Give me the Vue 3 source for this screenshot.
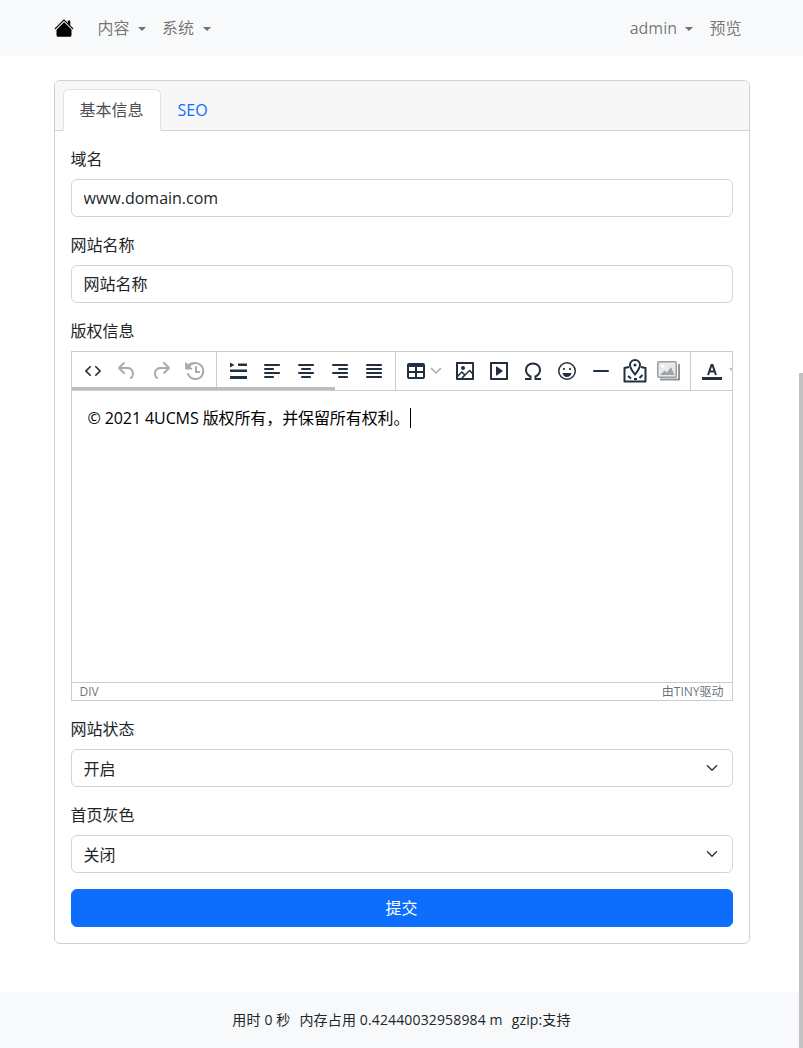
<script setup>
const d = {
  code: 'M9.8 15.7c.3.3.3.8 0 1-.3.4-.9.4-1.2 0l-4.4-4.1a.8.8 0 010-1.2l4.4-4.2c.3-.3.9-.3 1.2 0 .3.3.3.8 0 1.1L6 12l3.8 3.7zM14.2 15.7c-.3.3-.3.8 0 1 .4.4.9.4 1.2 0l4.4-4.1c.3-.3.3-.9 0-1.2l-4.4-4.2a.8.8 0 00-1.2 0c-.3.3-.3.8 0 1.1L18 12l-3.8 3.7z',
  undo: 'M6.4 8H12c3.7 0 6.2 2 6.8 5.1.6 2.7-.4 5.6-2.3 6.8a1 1 0 01-1-1.8c1.1-.6 1.8-2.7 1.4-4.6-.5-2.1-2.1-3.5-4.9-3.5H6.4l3.3 3.3a1 1 0 11-1.4 1.4l-5-5a1 1 0 010-1.4l5-5a1 1 0 011.4 1.4L6.4 8z',
  redo: 'M17.6 10H12c-2.8 0-4.4 1.4-4.9 3.5-.4 2 .3 4 1.4 4.6a1 1 0 11-1 1.8c-2-1.2-2.9-4.1-2.3-6.8.6-3 3-5.1 6.8-5.1h5.6l-3.3-3.3a1 1 0 111.4-1.4l5 5a1 1 0 010 1.4l-5 5a1 1 0 01-1.4-1.4l3.3-3.3z',
  restore: 'M17 13c0 .6-.4 1-1 1h-4V8c0-.6.4-1 1-1s1 .4 1 1v4h2c.6 0 1 .4 1 1zM12.600 3.100a9 9 0 11-8.900 11.400l1.900-.5a7 7 0 106.900-8.900c-2.100 0-4 1-5.300 2.400l2.100 2.100c.3.3.1.9-.4.9H2.600a.5.5 0 01-.5-.5V3.700c0-.4.5-.7.9-.4l2 2a9 9 0 017.600-2.200z',
  lineheight: 'M4 3.500l4.500 2.500L4 8.500v-5zM12 4.500h9V7h-9V4.500zM4 10.500h17V13H4v-2.500zM4 17h17v3H4v-3z',
  left: 'M5 5h14c.6 0 1 .4 1 1s-.4 1-1 1H5a1 1 0 110-2zm0 4h8c.6 0 1 .4 1 1s-.4 1-1 1H5a1 1 0 110-2zm0 8h8c.6 0 1 .4 1 1s-.4 1-1 1H5a1 1 0 010-2zm0-4h14c.6 0 1 .4 1 1s-.4 1-1 1H5a1 1 0 010-2z',
  center: 'M5 5h14c.6 0 1 .4 1 1s-.4 1-1 1H5a1 1 0 110-2zm3 4h8c.6 0 1 .4 1 1s-.4 1-1 1H8a1 1 0 110-2zm0 8h8c.6 0 1 .4 1 1s-.4 1-1 1H8a1 1 0 010-2zm-3-4h14c.6 0 1 .4 1 1s-.4 1-1 1H5a1 1 0 010-2z',
  right: 'M5 5h14c.6 0 1 .4 1 1s-.4 1-1 1H5a1 1 0 110-2zm6 4h8c.6 0 1 .4 1 1s-.4 1-1 1h-8a1 1 0 010-2zm0 8h8c.6 0 1 .4 1 1s-.4 1-1 1h-8a1 1 0 010-2zm-6-4h14c.6 0 1 .4 1 1s-.4 1-1 1H5a1 1 0 010-2z',
  justify: 'M5 5h14c.6 0 1 .4 1 1s-.4 1-1 1H5a1 1 0 110-2zm0 4h14c.6 0 1 .4 1 1s-.4 1-1 1H5a1 1 0 110-2zm0 4h14c.6 0 1 .4 1 1s-.4 1-1 1H5a1 1 0 010-2zm0 4h14c.6 0 1 .4 1 1s-.4 1-1 1H5a1 1 0 010-2z',
  table: 'M19 4a2 2 0 012 2v12a2 2 0 01-2 2H5a2 2 0 01-2-2V6c0-1.1.9-2 2-2h14zM5 14v4h6v-4H5zm14 0h-6v4h6v-4zm0-6h-6v4h6V8zM5 12h6V8H5v4z',
  image: 'M5 15.7l3.3-3.2c.3-.3.7-.3 1 0L12 15l4.1-4c.3-.4.8-.4 1 0l2 1.9V5H5v10.7zM5 18V19h3l2.8-2.9-2-2L5 17.9zm14-3l-2.5-2.4-6.4 6.5H19v-4zM4 3h16c.6 0 1 .4 1 1v16c0 .6-.4 1-1 1H4a1 1 0 01-1-1V4c0-.6.4-1 1-1zm6 8a2 2 0 100-4 2 2 0 000 4z',
  embed: 'M4 3h16c.6 0 1 .4 1 1v16c0 .6-.4 1-1 1H4a1 1 0 01-1-1V4c0-.6.4-1 1-1zm1 2v14h14V5H5zm4.8 2.6l5.6 4a.5.5 0 010 .8l-5.6 4A.5.5 0 019 16V8a.5.5 0 01.8-.4z',
  omega: 'M4 20h5.500v-2.500C6.700 16 5 13.800 5 11 5 7.200 8 4.500 12 4.500s7 2.700 7 6.500c0 2.800-1.700 5-4.500 6.500V20H20',
  emoji: 'M9 11c.6 0 1-.4 1-1s-.4-1-1-1-1 .4-1 1 .4 1 1 1zm6 0c.6 0 1-.4 1-1s-.4-1-1-1-1 .4-1 1 .4 1 1 1zm-3 7c-2.300 0-4-1.300-4.500-4h9c-.5 2.700-2.200 4-4.500 4zM12 3a9 9 0 100 18 9 9 0 000-18zm0 16.500a7.500 7.500 0 110-15 7.500 7.500 0 010 15z',
  hr: 'M5 11h14a1 1 0 010 2H5a1 1 0 010-2z'
}
const groups = [
  [{ p: d.code }, { p: d.undo, off: true }, { p: d.redo, off: true }, { p: d.restore, off: true }],
  [{ p: d.lineheight }, { p: d.left }, { p: d.center }, { p: d.right }, { p: d.justify }]
]
const media = [{ p: d.image }, { p: d.embed }, { p: d.omega, line: true }, { p: d.emoji }, { p: d.hr }]
</script>

<template>
  <div class="page">
    <nav class="navbar">
      <div class="container nav-inner">
        <a class="brand" href="#" aria-label="首页">
          <svg width="20" height="20" viewBox="0 0 16 16" fill="#000">
            <path fill-rule="evenodd" d="m8 3.293 6 6V13.500a1.500 1.500 0 0 1-1.500 1.500h-9A1.500 1.500 0 0 1 2 13.500v-4.200l6-6Zm5-.793V6l-2-2V2.500a.5.5 0 0 1 .5-.5h1a.5.5 0 0 1 .5.5Z" />
            <path fill-rule="evenodd" d="M7.293 1.500a1 1 0 0 1 1.414 0l6.647 6.646a.5.5 0 0 1-.708.708L8 2.207 1.354 8.854a.5.5 0 1 1-.708-.708L7.293 1.500Z" />
          </svg>
        </a>
        <a class="nav-link drop" href="#">内容</a>
        <a class="nav-link drop" href="#">系统</a>
        <span class="spacer"></span>
        <a class="nav-link drop" href="#">admin</a>
        <a class="nav-link" href="#">预览</a>
      </div>
    </nav>

    <main class="container main">
      <section class="card">
        <header class="card-header">
          <a class="tab active" href="#">基本信息</a>
          <a class="tab" href="#">SEO</a>
        </header>
        <form class="card-body" @submit.prevent>
          <div class="field">
            <label>域名</label>
            <input class="control" value="www.domain.com" />
          </div>
          <div class="field">
            <label>网站名称</label>
            <input class="control cjk" value="网站名称" />
          </div>
          <div class="field">
            <label>版权信息</label>
            <div class="editor">
              <div class="toolbar">
                <div v-for="(g, i) in groups" :key="i" class="tgroup">
                  <span v-for="(b, j) in g" :key="j" class="tbtn" :class="{ off: b.off }">
                    <svg width="24" height="24" viewBox="0 0 24 24"><path :d="b.p" /></svg>
                  </span>
                </div>
                <div class="tgroup">
                  <span class="tbtn wide">
                    <svg width="24" height="24" viewBox="0 0 24 24"><path :d="d.table" /></svg>
                    <svg class="chev" width="12" height="8" viewBox="0 0 12 8"><path d="M1 1l5 5 5-5" /></svg>
                  </span>
                  <span v-for="(m, j) in media" :key="j" class="tbtn">
                    <svg width="24" height="24" viewBox="0 0 24 24"><path :class="{ line: m.line }" :d="m.p" /></svg>
                  </span>
                  <span class="tbtn">
                    <svg width="24" height="24" viewBox="0 0 24 24">
                      <path class="line" d="M6 8L1.500 9V22.500H22.500V9L18 8" stroke-linejoin="round" />
                      <path class="line" d="M12 1a5 5 0 015 5c0 3-3 7-5 9.500C10 13 7 9 7 6a5 5 0 015-5z" />
                      <circle cx="12" cy="6" r="1.500" />
                      <path class="line" d="M5 17l3 2.500M11 20h3M16.500 19l3-3" />
                    </svg>
                  </span>
                  <span class="tbtn">
                    <svg width="24" height="24" viewBox="0 0 24 24">
                      <path d="M22 5v15.500H3" fill="none" stroke="#8f9499" stroke-width="2" />
                      <rect x="0.750" y="2.750" width="18.500" height="15.500" rx="1" fill="#e9eaeb" stroke="#9a9ea3" stroke-width="1.500" />
                      <circle cx="5.500" cy="7" r="1.800" fill="#fff" />
                      <path d="M3 16l4.500-4.500 2.500 2 4-5.500 3.500 8z" fill="#9fa3a8" />
                    </svg>
                  </span>
                </div>
                <div class="tgroup last">
                  <span class="tbtn">
                    <svg width="24" height="24" viewBox="0 0 24 24">
                      <path class="line" d="M8 16l3.500-10h1L16 16M9.500 12.500h5" />
                      <rect x="2" y="18" width="20" height="3" />
                    </svg>
                  </span>
                  <svg class="chev" width="12" height="8" viewBox="0 0 12 8"><path d="M1 1l5 5 5-5" /></svg>
                </div>
                <span class="tscroll"></span>
              </div>
              <div class="content">
                <p>© 2021 4UCMS 版权所有，并保留所有权利。<span class="caret"></span></p>
              </div>
              <div class="status">
                <span>DIV</span>
                <span>由TINY驱动</span>
              </div>
            </div>
          </div>
          <div class="field">
            <label>网站状态</label>
            <select class="control select"><option>开启</option></select>
          </div>
          <div class="field">
            <label>首页灰色</label>
            <select class="control select"><option>关闭</option></select>
          </div>
          <button class="submit" type="submit">提交</button>
        </form>
      </section>
    </main>

    <footer class="footer">
      <span>用时 0 秒</span>
      <span>内存占用 0.42440032958984 m</span>
      <span>gzip:支持</span>
    </footer>
    <div class="page-scroll"></div>
  </div>
</template>

<style>
html, body { margin: 0; height: 1048px; overflow: hidden; background: #fff; }
</style>

<style scoped>
.page {
  position: relative;
  height: 1048px;
  overflow: hidden;
  font: 16px/24px "Open Sans", "Noto Sans CJK SC", sans-serif;
  color: #212529;
}
.container { width: 720px; margin: 0 auto; padding: 0 12px; box-sizing: border-box; }
a { text-decoration: none; }

.navbar { height: 56px; background: #f8f9fa; }
.nav-inner { display: flex; align-items: center; height: 56px; }
.brand { display: flex; width: 36px; }
.nav-link { color: rgba(0, 0, 0, .55); padding: 8px; }
.drop::after {
  content: "";
  display: inline-block;
  margin-left: 8.500px;
  vertical-align: 3px;
  border-top: 4.800px solid;
  border-left: 4.800px solid transparent;
  border-right: 4.800px solid transparent;
}
.spacer { flex: 1; }

.main { margin-top: 24px; }
.card { border: 1px solid rgba(0, 0, 0, .18); border-radius: 6px; overflow: hidden; }
.card-header {
  display: flex;
  height: 50px;
  box-sizing: border-box;
  padding: 8px 8px 0;
  background: #f7f7f7;
  border-bottom: 1px solid #d2d4d6;
}
.tab {
  height: 42px;
  box-sizing: border-box;
  padding: 8px 16px;
  margin-bottom: -1px;
  border: 1px solid transparent;
  border-radius: 6px 6px 0 0;
  color: #0d6efd;
}
.tab.active { height: 42px; background: #fff; color: #495057; border-color: #dee2e6 #dee2e6 #fff; }

.card-body { padding: 16px; display: flex; flex-direction: column; gap: 16px; }
.field { display: flex; flex-direction: column; gap: 8px; }
.field label { height: 24px; }
.control {
  display: block;
  width: 100%;
  height: 38px;
  box-sizing: border-box;
  padding: 6px 12px;
  font: inherit;
  color: #212529;
  background-color: #fff;
  border: 1px solid #ced4da;
  border-radius: 6px;
  outline: none;
}
.cjk { padding: 5px 12px 7px; }
.select {
  appearance: none;
  padding: 7px 36px 5px 12px;
  background-image: url("data:image/svg+xml,%3csvg xmlns='http://www.w3.org/2000/svg' viewBox='0 0 16 16'%3e%3cpath fill='none' stroke='%23343a40' stroke-linecap='round' stroke-linejoin='round' stroke-width='2' d='M2 5l6 6 6-6'/%3e%3c/svg%3e");
  background-repeat: no-repeat;
  background-position: right 12px center;
  background-size: 16px 12px;
}

.editor {
  height: 350px;
  box-sizing: border-box;
  border: 1px solid #ccc;
  display: flex;
  flex-direction: column;
}
.toolbar {
  position: relative;
  display: flex;
  height: 39px;
  flex: none;
  box-sizing: border-box;
  border-bottom: 1px solid #ccc;
  overflow: hidden;
}
.tgroup {
  display: flex;
  flex: none;
  align-items: center;
  padding: 0 4px;
  border-left: 1px solid #ccc;
}
.tgroup:first-child { border-left: 0; }
.tgroup.last { padding-right: 0; }
.tbtn {
  display: flex;
  flex: none;
  align-items: center;
  justify-content: center;
  width: 34px;
  height: 38px;
}
.tbtn.wide { width: 48px; justify-content: flex-start; padding-left: 4px; box-sizing: border-box; }
.tbtn svg { fill: #222f3e; flex: none; }
.tbtn.off svg { fill: #a7acb2; }
.tbtn .line { fill: none; stroke: #222f3e; stroke-width: 2; }
.tbtn svg.chev { margin-left: 2px; fill: none; }
.chev { flex: none; }
.chev path { fill: none; stroke: #a7acb2; stroke-width: 1.500; }
.tscroll {
  position: absolute;
  left: 0;
  bottom: 0;
  width: 263px;
  height: 3px;
  background: #bcbcbc;
}
.content {
  flex: 1;
  padding: 17px 16px 16px;
  font: 16px/20px "Open Sans", "Noto Sans CJK SC", sans-serif;
  color: #000;
  letter-spacing: -.1px;
}
.content p { margin: 0; }
.caret {
  display: inline-block;
  height: 20px;
  margin-left: 1px;
  border-left: 1px solid #000;
  vertical-align: top;
}
.status {
  display: flex;
  justify-content: space-between;
  align-items: center;
  flex: none;
  height: 18px;
  box-sizing: border-box;
  padding: 0 8px;
  border-top: 1px solid #ccc;
  font-size: 12px;
  line-height: 17px;
  color: rgba(34, 47, 62, .7);
}

.submit {
  height: 38px;
  padding: 0;
  border: 1px solid #0d6efd;
  border-radius: 6px;
  background: #0d6efd;
  color: #fff;
  font: inherit;
}

.footer {
  display: flex;
  justify-content: center;
  align-items: center;
  gap: 9px;
  height: 56px;
  margin-top: 48px;
  background: #f8f9fa;
  font-size: 14px;
  letter-spacing: .14px;
}
.page-scroll {
  position: absolute;
  top: 373px;
  right: 0;
  bottom: 0;
  width: 4px;
  background: #c1c1c1;
}
</style>
